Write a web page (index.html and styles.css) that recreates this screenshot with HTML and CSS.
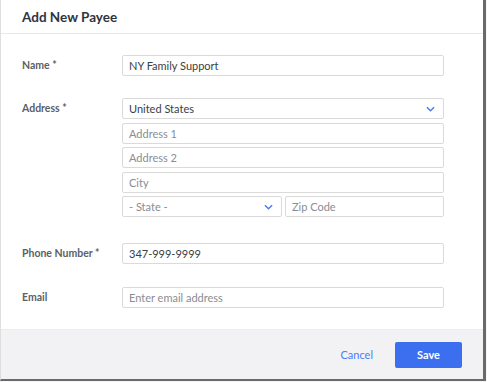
FILE: index.html
```html
<!DOCTYPE html>
<html lang="en">
<head>
  <meta charset="UTF-8">
  <title>Add New Payee</title>
  <link rel="stylesheet" href="styles.css">
</head>
<body>
  <div class="modal">
    <header class="modal-header">
      <h1>Add New Payee</h1>
    </header>

    <div class="modal-body">
      <div class="form-row">
        <label class="field-label">Name *</label>
        <div class="field-group">
          <div class="input filled">NY Family Support</div>
        </div>
      </div>

      <div class="form-row row-address">
        <label class="field-label">Address *</label>
        <div class="field-group">
          <div class="input select filled">
            United States
            <svg class="chevron" viewBox="0 0 10 6"><path d="M1 1L5 5L9 1" fill="none" stroke="#4a7cf6" stroke-width="1.6"/></svg>
          </div>
          <div class="input">Address 1</div>
          <div class="input">Address 2</div>
          <div class="input">City</div>
          <div class="split">
            <div class="input select state">
              - State -
              <svg class="chevron" viewBox="0 0 10 6"><path d="M1 1L5 5L9 1" fill="none" stroke="#4a7cf6" stroke-width="1.6"/></svg>
            </div>
            <div class="input zip">Zip Code</div>
          </div>
        </div>
      </div>

      <div class="form-row row-phone">
        <label class="field-label">Phone Number *</label>
        <div class="field-group">
          <div class="input filled">347-999-9999</div>
        </div>
      </div>

      <div class="form-row row-email">
        <label class="field-label">Email</label>
        <div class="field-group">
          <div class="input">Enter email address</div>
        </div>
      </div>
    </div>

    <footer class="modal-footer">
      <button class="btn-link">Cancel</button>
      <button class="btn-primary">Save</button>
    </footer>
  </div>
</body>
</html>
```

FILE: styles.css
```css
:root {
  --primary: #3b6ff0;
  --link: #4a7cf6;
  --dark: #2f3440;
  --label: #5b5f67;
  --border: #dadada;
  --placeholder: #8a8d93;
  --footer: #f2f2f4;
}

body {
  margin: 0;
  background: #f5f5f5;
  font-family: 'Lato', 'Open Sans', sans-serif;
  color: var(--dark);
}

.modal {
  width: 482px;
  height: 379px;
  background: white;
  border-left: 1px solid #dedede;
  border-right: 3px solid #6a6a6a;
  border-bottom: 2px solid #6a6a6a;
  display: flex;
  flex-direction: column;
}

.modal-header {
  height: 33px;
  border-bottom: 1px solid #e8e8ea;
  padding-left: 21px;
  display: flex;
  align-items: center;
}

h1 {
  margin: 0;
  font-size: 13.5px;
  font-weight: 700;
  color: var(--dark);
}

.modal-body {
  flex: 1;
  padding: 21px 0 0 21px;
}

.form-row {
  display: flex;
}

.row-address {
  margin-top: 22px;
}

.row-phone {
  margin-top: 26px;
}

.row-email {
  margin-top: 23px;
}

.field-label {
  width: 100px;
  height: 21px;
  line-height: 21px;
  font-size: 10.5px;
  font-weight: 700;
  color: var(--label);
}

.field-group {
  width: 322px;
  display: flex;
  flex-direction: column;
  gap: 3.5px;
}

.input {
  box-sizing: border-box;
  height: 21px;
  border: 1px solid var(--border);
  border-radius: 2px;
  padding: 0 6px;
  display: flex;
  align-items: center;
  font-size: 11px;
  color: var(--placeholder);
}

.input.filled {
  color: #3a3d44;
}

.select {
  justify-content: space-between;
  padding-right: 8px;
}

.chevron {
  width: 9px;
  height: 6px;
}

.split {
  display: flex;
  gap: 3px;
}

.state {
  width: 160px;
}

.zip {
  flex: 1;
}

.modal-footer {
  height: 50px;
  background: var(--footer);
  border-top: 1px solid #ececee;
  box-sizing: border-box;
  display: flex;
  align-items: center;
  justify-content: flex-end;
  gap: 22px;
  padding-right: 21px;
}

button {
  border: none;
  font-family: inherit;
  font-size: 11px;
  cursor: pointer;
}

.btn-link {
  background: none;
  color: var(--link);
  padding: 0;
}

.btn-primary {
  width: 67px;
  height: 26px;
  background: var(--primary);
  color: white;
  font-weight: 700;
  border-radius: 2px;
}
```
